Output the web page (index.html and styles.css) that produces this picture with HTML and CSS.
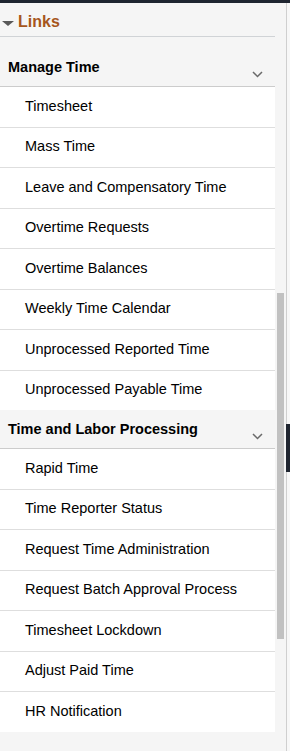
FILE: index.html
```html
<!DOCTYPE html>
<html lang="en">
<head>
<meta charset="utf-8">
<title>Links</title>
<link rel="stylesheet" href="styles.css">
</head>
<body>
<div class="topbar"></div>
<div class="wrap">
  <div class="main">
    <div class="links-head">
      <span class="tri"></span>
      <span class="links-title">Links</span>
    </div>

    <div class="group-head first">
      <span class="group-title">Manage Time</span>
      <svg class="chev" width="11" height="7" viewBox="0 0 11 7"><path d="M1 1 L5.5 5.5 L10 1" fill="none" stroke="#6a6a6a" stroke-width="1.5"/></svg>
    </div>
    <ul class="items">
      <li>Timesheet</li>
      <li>Mass Time</li>
      <li>Leave and Compensatory Time</li>
      <li>Overtime Requests</li>
      <li>Overtime Balances</li>
      <li>Weekly Time Calendar</li>
      <li>Unprocessed Reported Time</li>
      <li>Unprocessed Payable Time</li>
    </ul>

    <div class="group-head">
      <span class="group-title">Time and Labor Processing</span>
      <svg class="chev" width="11" height="7" viewBox="0 0 11 7"><path d="M1 1 L5.5 5.5 L10 1" fill="none" stroke="#6a6a6a" stroke-width="1.5"/></svg>
    </div>
    <ul class="items">
      <li>Rapid Time</li>
      <li>Time Reporter Status</li>
      <li>Request Time Administration</li>
      <li>Request Batch Approval Process</li>
      <li>Timesheet Lockdown</li>
      <li>Adjust Paid Time</li>
      <li>HR Notification</li>
    </ul>
  </div>
  <div class="track"><div class="thumb"></div></div>
  <div class="edge"><div class="edge-block"></div></div>
</div>
</body>
</html>
```

FILE: styles.css
```css
html, body {
  margin: 0;
  padding: 0;
}
body {
  background: #f5f5f5;
  font-family: "Liberation Sans", Arial, sans-serif;
  color: #000;
  width: 290px;
  height: 751px;
  overflow: hidden;
}
.topbar {
  height: 3px;
  background: #1f2530;
}
.wrap {
  display: flex;
  height: 748px;
}
.main {
  width: 275px;
  flex: none;
}
.links-head {
  display: flex;
  align-items: center;
  height: 28px;
  padding-top: 5px;
  border-bottom: 1px solid #d0d3d6;
}
.tri {
  width: 0;
  height: 0;
  margin-left: 2px;
  margin-right: 4px;
  border-left: 6px solid transparent;
  border-right: 6px solid transparent;
  border-top: 5px solid #595959;
  margin-top: 2px;
}
.links-title {
  font-size: 16px;
  font-weight: bold;
  color: #a6561c;
  line-height: 20px;
}
.group-head {
  display: flex;
  justify-content: space-between;
  padding: 9px 12px 9px 8px;
  border-bottom: 1px solid #cccccc;
}
.group-head.first {
  padding-top: 20px;
}
.group-title {
  font-size: 14.5px;
  font-weight: bold;
  line-height: 20px;
}
.chev {
  align-self: flex-end;
  margin-bottom: -1px;
}
.items {
  list-style: none;
  margin: 0;
  padding: 0;
  background: #fff;
}
.items li {
  font-size: 14.5px;
  line-height: 20px;
  padding: 8.5px 0 11px 25px;
  border-bottom: 1px solid #dedede;
}
.items li:last-child {
  border-bottom: none;
}
.track {
  width: 11px;
  flex: none;
  padding-top: 290px;
}
.thumb {
  width: 7px;
  height: 346px;
  margin-left: 2px;
  background: #c1c1c1;
}
.edge {
  width: 3px;
  flex: none;
  border-left: 1px solid #cfcfcf;
  background: #f7f7f7;
}
.edge-block {
  margin-top: 421px;
  margin-left: -1px;
  width: 4px;
  height: 48px;
  background: #1f2530;
}
```
